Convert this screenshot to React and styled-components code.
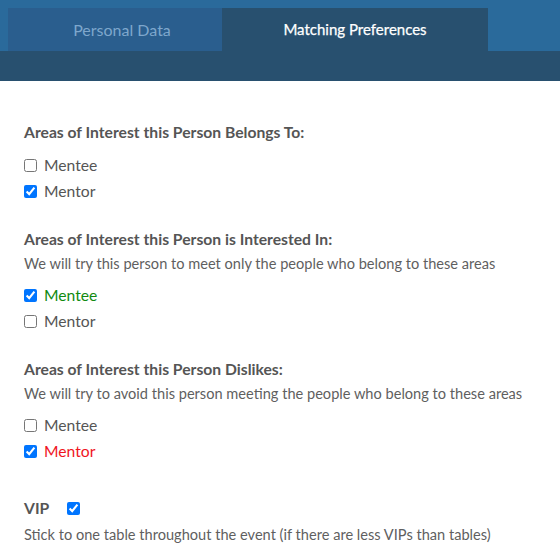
import React from 'react';
import styled, { createGlobalStyle } from 'styled-components';

const GlobalStyle = createGlobalStyle`
  body {
    margin: 0;
    background: #ffffff;
    font-family: Lato, "Open Sans", sans-serif;
  }
`;

const Header = styled.header`
  background: #2a6a9b;
  padding-top: 8px;
`;

const TabBar = styled.div`
  display: flex;
  padding-left: 8px;
  height: 43px;
`;

const Tab = styled.div`
  width: ${(p) => p.width}px;
  box-sizing: border-box;
  padding-left: ${(p) => p.shift || 0}px;
  display: flex;
  align-items: center;
  justify-content: center;
  padding-bottom: 1px;
  font-size: ${(p) => (p.active ? 15 : 16)}px;
  background: ${(p) => (p.active ? '#28506f' : '#2a5e8e')};
  color: ${(p) => (p.active ? '#ffffff' : '#7ea7cc')};
  -webkit-text-stroke: ${(p) => (p.active ? '0.25px #ffffff' : '0')};
`;

const Band = styled.div`
  height: 30px;
  background: #28506f;
`;

const Content = styled.main`
  padding: 40px 24px 0;
  color: #555555;
`;

const Section = styled.section`
  margin-top: ${(p) => p.gap || 0}px;
`;

const Heading = styled.h3`
  margin: 0;
  display: flex;
  align-items: center;
  gap: 18px;
  font-size: 15.7px;
  line-height: 22px;
  font-weight: 700;
  color: #555555;
`;

const Subtitle = styled.p`
  margin: ${(p) => p.top || 0}px 0 0;
  font-size: 14.6px;
  line-height: 24px;
  color: #5f5f5f;
  white-space: nowrap;
`;

const Options = styled.div`
  display: flex;
  flex-direction: column;
  margin-top: ${(p) => p.top}px;
`;

const Option = styled.label`
  display: flex;
  align-items: center;
  gap: 7px;
  height: 26px;
  font-size: 15.7px;
  color: ${(p) => p.color || '#555555'};
`;

const Check = styled.input.attrs({ type: 'checkbox' })`
  width: 13px;
  height: 13px;
  margin: 0;
`;

const Group = ({ title, note, options, gap, top }) => (
  <Section gap={gap}>
    <Heading>{title}</Heading>
    {note && <Subtitle top={2}>{note}</Subtitle>}
    <Options top={top}>
      {options.map((o) => (
        <Option key={o.label} color={o.checked ? o.color : undefined}>
          <Check defaultChecked={o.checked} />
          {o.label}
        </Option>
      ))}
    </Options>
  </Section>
);

export default function App() {
  return (
    <>
      <GlobalStyle />
      <Header>
        <TabBar>
          <Tab width={214} shift={14}>Personal Data</Tab>
          <Tab width={266} active>Matching Preferences</Tab>
        </TabBar>
        <Band />
      </Header>
      <Content>
        <Group
          title="Areas of Interest this Person Belongs To:"
          top={9}
          options={[
            { label: 'Mentee', checked: false },
            { label: 'Mentor', checked: true },
          ]}
        />
        <Group
          gap={24}
          top={6}
          title="Areas of Interest this Person is Interested In:"
          note="We will try this person to meet only the people who belong to these areas"
          options={[
            { label: 'Mentee', checked: true, color: '#108a10' },
            { label: 'Mentor', checked: false },
          ]}
        />
        <Group
          gap={24}
          top={6}
          title="Areas of Interest this Person Dislikes:"
          note="We will try to avoid this person meeting the people who belong to these areas"
          options={[
            { label: 'Mentee', checked: false },
            { label: 'Mentor', checked: true, color: '#f0141e' },
          ]}
        />
        <Section gap={33}>
          <Heading>
            VIP
            <Check defaultChecked />
          </Heading>
          <Subtitle top={4}>
            Stick to one table throughout the event (if there are less VIPs than tables)
          </Subtitle>
        </Section>
      </Content>
    </>
  );
}
